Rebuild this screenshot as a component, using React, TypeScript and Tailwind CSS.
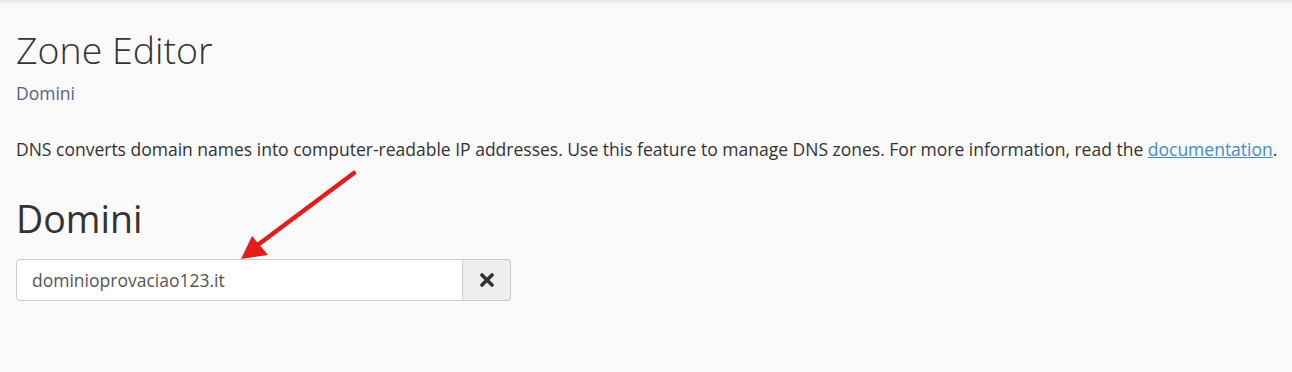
export default function App() {
  return (
    <div className="relative min-h-[372px] bg-[#fafafa] text-[#333] font-['Open_Sans',sans-serif] overflow-hidden">
      {/* top shadow */}
      <div className="h-[5px] bg-gradient-to-b from-[#e6e6e6] to-[#fafafa]" />
      <div className="px-4">
        <h1 className="mt-[24px] text-[37.5px] leading-[41px] font-light">Zone Editor</h1>
        <div className="mt-[11px] text-[17.5px] leading-[24px] text-[#5d5a90]">Domini</div>
        <p className="mt-[32px] whitespace-nowrap text-[17.5px] leading-[24px]">
          DNS converts domain names into computer-readable IP addresses. Use this feature to manage DNS zones. For more information, read the{" "}
          <a href="#" className="text-[#428bca] underline">documentation</a>.
        </p>
        <h2 className="mt-[37px] text-[37.5px] leading-[41px]">Domini</h2>
        <div className="mt-[20px] flex w-[495px]">
          <input
            readOnly
            value="dominioprovaciao123.it"
            className="h-[42px] flex-1 rounded-l-[4px] border border-[#ccc] bg-white pl-[15px] text-[17.5px] text-[#555] outline-none"
          />
          <button className="flex h-[42px] w-[48px] items-center justify-center rounded-r-[4px] border border-l-0 border-[#ccc] bg-[#eee]">
            <svg width="14" height="14" viewBox="0 0 14 14">
              <path d="M2 2 L12 12 M12 2 L2 12" stroke="#333" strokeWidth="3.6" strokeLinecap="round" />
            </svg>
          </button>
        </div>
      </div>
      {/* annotation arrow */}
      <svg className="absolute left-0 top-0 pointer-events-none" width="1292" height="372">
        <line x1="354" y1="173" x2="259" y2="244" stroke="#e31c1c" strokeWidth="4.5" strokeLinecap="round" />
        <polygon points="241,259 252,236 268,255" fill="#e31c1c" />
      </svg>
    </div>
  );
}
